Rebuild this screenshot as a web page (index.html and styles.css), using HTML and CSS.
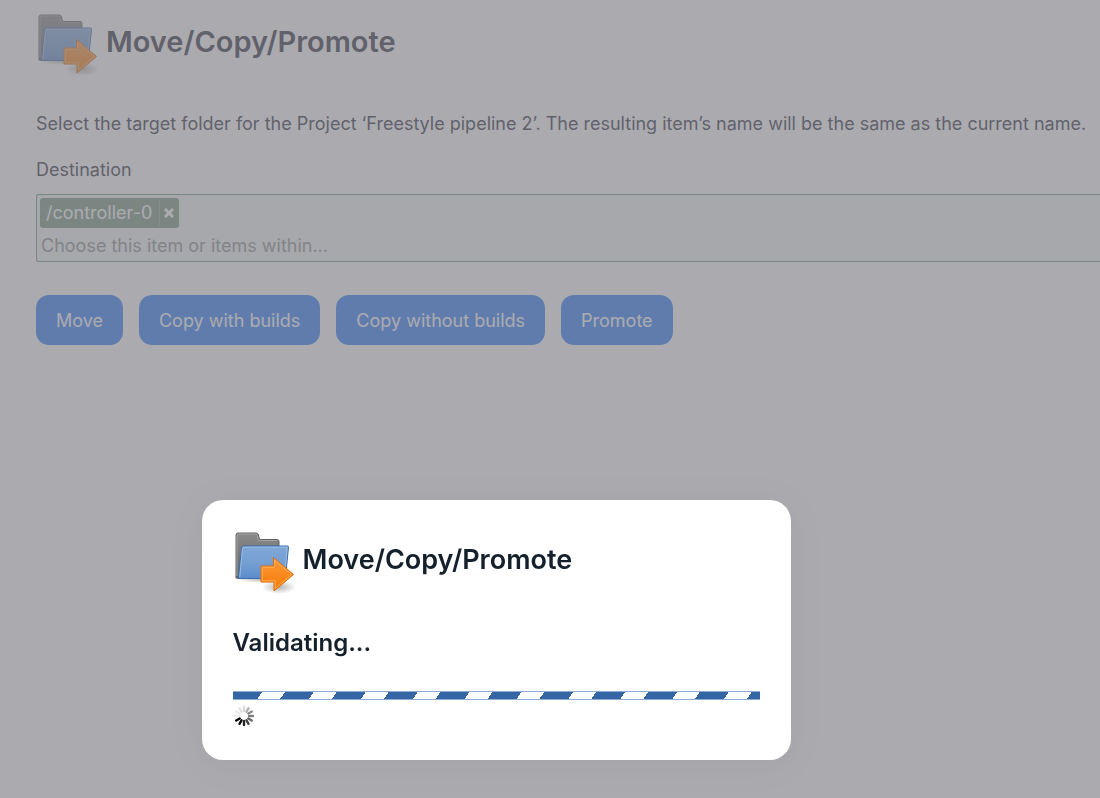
FILE: index.html
```html
<!DOCTYPE html>
<html lang="en">
<head>
  <meta charset="UTF-8" />
  <title>Move/Copy/Promote</title>
  <link rel="stylesheet" href="styles.css">
</head>
<body>

  <svg width="0" height="0" class="defs" aria-hidden="true">
    <defs>
      <linearGradient id="grey" x1="0" y1="0" x2="0" y2="1">
        <stop offset="0" stop-color="#8a8a8a" /><stop offset="1" stop-color="#626262" />
      </linearGradient>
      <linearGradient id="blue" x1="0" y1="0" x2="0" y2="1">
        <stop offset="0" stop-color="#7fa8d8" /><stop offset=".5" stop-color="#76a0d3" /><stop offset="1" stop-color="#5b8ccb" />
      </linearGradient>
      <linearGradient id="orange" x1="0" y1="0" x2="0" y2="1">
        <stop offset="0" stop-color="#fb9a3c" /><stop offset="1" stop-color="#f57900" />
      </linearGradient>
      <radialGradient id="shade">
        <stop offset="0" stop-color="#000" stop-opacity=".3" /><stop offset="1" stop-color="#000" stop-opacity="0" />
      </radialGradient>
    </defs>
    <symbol id="folder-move" viewBox="0 0 64 64">
      <ellipse cx="30" cy="49" rx="28" ry="4" fill="url(#shade)" />
      <ellipse cx="46" cy="57" rx="17" ry="7" fill="url(#shade)" />
      <path d="M3 48V5Q3 3 5 3H23Q25 3 25.500 5L26.500 9.500H44Q46 9.500 46 11.500V41L6 48.500Z" fill="url(#grey)" stroke="#606060" />
      <path d="M4 46V6Q4 4 6 4H22.500Q24 4 24.200 5.500L25.500 10.500H44" fill="none" stroke="#a4a4a4" />
      <path d="M10.500 16H54.500Q55.700 16 55.500 17.500L52.500 46.500Q52.300 48.500 50.500 48.500H6Q5 48.500 5.500 47L8.500 18Q8.700 16 10.500 16Z" fill="url(#blue)" stroke="#3d6dac" />
      <path d="M6.800 47L9.500 18.500Q9.700 17.200 11 17.200H54.100L51.500 45" fill="none" stroke="#98bbe4" />
      <path d="M28 36H40.500V27.500L60.500 44.500L41 61V52H28Z" fill="url(#orange)" stroke="#dc6c0a" stroke-linejoin="round" />
      <path d="M29.200 50.800V37.200H41.700V29.900L58.800 44.500L42.200 58.400V50.800Z" fill="none" stroke="#ffae5a" />
    </symbol>
  </svg>

  <main>
    <header class="title">
      <svg class="icon" aria-hidden="true"><use href="#folder-move" /></svg>
      <h1>Move/Copy/Promote</h1>
    </header>

    <p>Select the target folder for the Project ‘Freestyle pipeline 2’. The resulting item’s name will be the same as the current name.</p>

    <form>
      <label for="destination">Destination</label>
      <div class="picker">
        <span class="chip">/controller-0<button type="button" aria-label="Remove">
          <svg width="10" height="10" viewBox="0 0 10 10"><path d="M1 1L9 9M9 1L1 9" stroke="currentColor" stroke-width="3" /></svg>
        </button></span>
        <input type="text" id="destination" placeholder="Choose this item or items within..." />
      </div>
      <div class="actions">
        <button type="button">Move</button>
        <button type="button">Copy with builds</button>
        <button type="button">Copy without builds</button>
        <button type="button">Promote</button>
      </div>
    </form>
  </main>

  <div class="overlay">
    <section class="dialog" role="dialog" aria-labelledby="dialog-title">
      <header class="title">
        <svg class="icon" aria-hidden="true"><use href="#folder-move" /></svg>
        <h2 id="dialog-title">Move/Copy/Promote</h2>
      </header>
      <h3>Validating...</h3>
      <progress aria-label="Validating"></progress>
      <svg class="spinner" viewBox="-11 -11 22 22" aria-hidden="true">
        <g stroke="#000" stroke-width="2.400" stroke-linecap="round">
          <path d="M0 -5V-9" opacity=".14" />
          <path d="M0 -5V-9" transform="rotate(30)" opacity=".3" />
          <path d="M0 -5V-9" transform="rotate(60)" opacity=".45" />
          <path d="M0 -5V-9" transform="rotate(90)" opacity=".5" />
          <path d="M0 -5V-9" transform="rotate(120)" opacity=".6" />
          <path d="M0 -5V-9" transform="rotate(150)" opacity=".75" />
          <path d="M0 -5V-9" transform="rotate(180)" opacity=".85" />
          <path d="M0 -5V-9" transform="rotate(210)" opacity=".95" />
          <path d="M0 -5V-9" transform="rotate(240)" />
          <path d="M0 -5V-9" transform="rotate(270)" opacity=".06" />
          <path d="M0 -5V-9" transform="rotate(300)" opacity=".08" />
          <path d="M0 -5V-9" transform="rotate(330)" opacity=".11" />
        </g>
      </svg>
    </section>
  </div>

</body>
</html>
```

FILE: styles.css
```css
* { box-sizing: border-box; }
body {
  font-family: 'Inter', sans-serif;
  font-size: 18px;
  line-height: 26px;
  background: #fff;
  color: #2c303c;
  margin: 0;
}
.defs { position: absolute; }
main { padding: 12px 0 0 36px; }
.title {
  display: flex;
  align-items: center;
  gap: 6px;
}
.icon {
  width: 64px;
  height: 64px;
}
h1, h2, h3 { margin: 0; font-weight: 600; }
h1, h2 { padding-bottom: 4px; }
h1 { font-size: 29px; }
p { margin: 35px 0 20px; white-space: nowrap; }
label { display: block; }
.picker {
  display: flex;
  flex-direction: column;
  align-items: flex-start;
  margin-top: 11px;
  padding: 3px 3px 0;
  height: 68px;
  border: 1px solid #6a9a78;
  border-right: 0;
  border-radius: 3px 0 0 3px;
  background: #eff8f5;
}
.chip {
  display: flex;
  align-items: center;
  height: 30px;
  padding-left: 6px;
  border-radius: 3px;
  background: #779780;
  color: #fff;
}
.chip button {
  display: flex;
  align-items: center;
  justify-content: center;
  width: 20px;
  height: 26px;
  margin-left: 7px;
  padding: 0 2px 0 0;
  border: 0;
  border-left: 1px solid #96b3a0;
  background: none;
  color: #fff;
}
.picker input {
  width: 100%;
  height: 32px;
  padding: 2px 0 0 1px;
  border: 0;
  outline: 0;
  background: none;
  font: inherit;
}
.picker input::placeholder { color: #8c8f8d; opacity: 1; }
.actions {
  display: flex;
  gap: 16px;
  margin-top: 33px;
}
.actions button {
  height: 50px;
  padding: 2px 20px 0;
  border: 0;
  border-radius: 13px;
  background: #277df8;
  color: #fff;
  font: inherit;
}
.overlay {
  position: fixed;
  inset: 0;
  display: flex;
  align-items: flex-end;
  justify-content: center;
  padding: 0 108px 38px 0;
  background: rgba(126, 125, 132, .65);
}
.dialog {
  width: 589px;
  padding: 30px 31px 33px;
  border-radius: 21px;
  background: #fff;
  color: #14202b;
  box-shadow: 0 4px 40px rgba(0, 0, 0, .05);
}
h2 { font-size: 27px; }
h3 {
  margin: 36px 0 35px;
  font-size: 24px;
}
progress {
  display: block;
  width: 100%;
  height: 9px;
  appearance: none;
  border: solid #8eabd3;
  border-width: 1px 0;
}
progress::-webkit-progress-bar {
  background: repeating-linear-gradient(124deg, #3465a4 0 24px, #fff 24px 43px);
}
.spinner {
  display: block;
  width: 22px;
  height: 22px;
  margin-top: 5px;
}
```
